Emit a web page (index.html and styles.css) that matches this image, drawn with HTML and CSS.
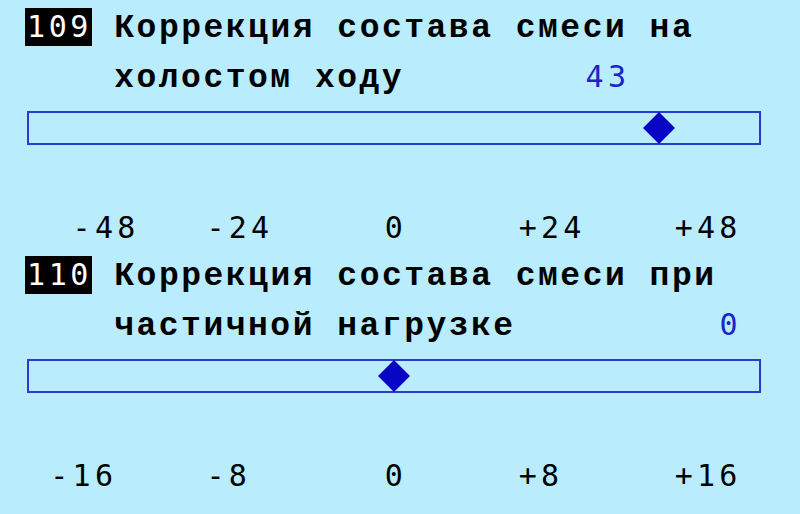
FILE: index.html
```html
<!DOCTYPE html>
<html>
<head>
    <meta charset="utf-8" />
    <title>Коррекция состава смеси</title>
    <link rel="stylesheet" href="styles.css">
</head>
<body>

    <div class="param">
        <div class="line"><span class="num">109</span><span class="name"> Коррекция состава смеси на</span></div>
        <div class="line"><span class="name">    холостом ходу        </span><span class="value">43</span></div>
        <div class="bar"><span class="marker" style="left: 86.3%"></span></div>
        <div class="scale">  -48   -24     0     +24    +48</div>
    </div>

    <div class="param">
        <div class="line"><span class="num">110</span><span class="name"> Коррекция состава смеси при</span></div>
        <div class="line"><span class="name">    частичной нагрузке         </span><span class="value">0</span></div>
        <div class="bar"><span class="marker" style="left: 50%"></span></div>
        <div class="scale"> -16    -8      0     +8     +16</div>
    </div>

</body>
</html>
```

FILE: styles.css
```css
body {
    margin: 0;
    background-color: #b9ecfd;
    color: black;
    font-family: "Liberation Mono", monospace;
}

/* every text row sits on the same 22.3px character grid */
.param {
    box-sizing: border-box;
    height: 248px;
    padding: 4px 0 0 25px;
}

.line {
    height: 50px;
    line-height: 50px;
    white-space: pre;
}

.name {
    font-family: "Liberation Mono", monospace;
    font-weight: bold;
    font-size: 33px;
    letter-spacing: 2.5px;
}

.num,
.value,
.scale {
    font-family: "DejaVu Sans Mono", monospace;
    font-size: 30px;
    letter-spacing: 4.24px;
}

.num {
    display: inline-block;
    padding-left: 2px;
    letter-spacing: 3.6px;
    line-height: 38px;
    background: black;
    color: white;
}

.value {
    padding-left: 3px;
    line-height: 30px;
    color: #1a24c8;
}

.bar {
    position: relative;
    box-sizing: border-box;
    width: 734px;
    height: 34px;
    margin: 7px 0 0 2px;
    border: 2px solid #2b3ad2;
}

.marker {
    position: absolute;
    top: 50%;
    width: 32px;
    height: 32px;
    background: #0606c4;
    clip-path: polygon(50% 0, 100% 50%, 50% 100%, 0 50%);
    transform: translate(-50%, -50%);
}

.scale {
    margin-top: 58px;
    padding-left: 3px;
    line-height: 50px;
    white-space: pre;
}
```
